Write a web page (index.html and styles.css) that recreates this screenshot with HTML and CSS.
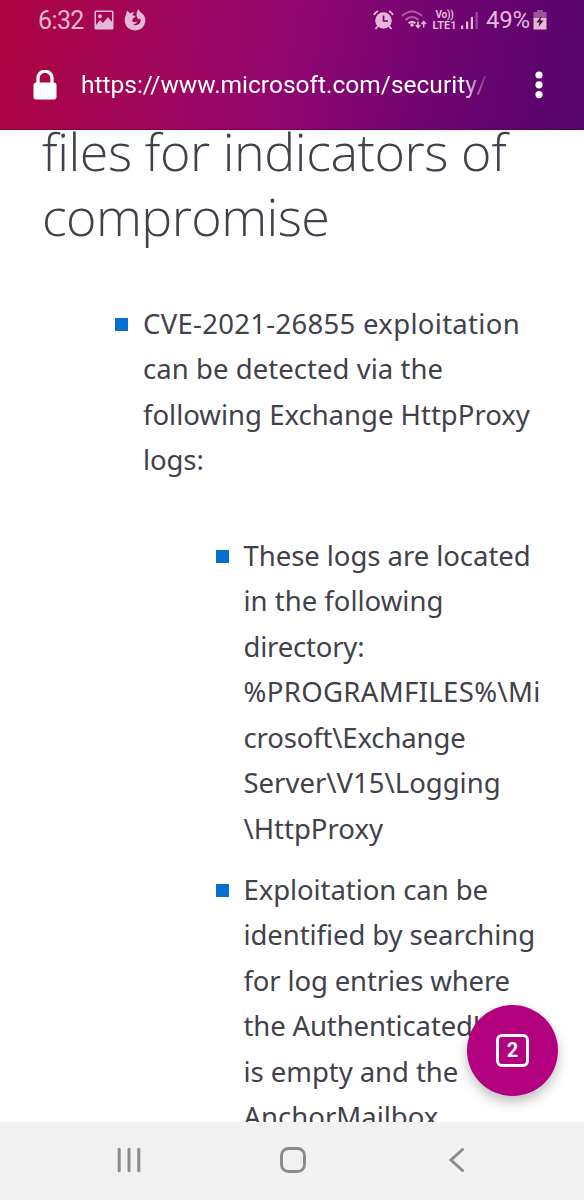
FILE: index.html
```html
<!DOCTYPE html>
<html lang="en">
<head>
<meta charset="utf-8">
<title>Microsoft Security</title>
<link rel="stylesheet" href="styles.css">
</head>
<body>
<div class="phone">
  <header class="chrome">
    <div class="status">
      <span class="clock">6:32</span>
      <svg class="photo" width="20" height="20" viewBox="0 0 20 20"><path fill="currentColor" fill-rule="evenodd" d="M2 0.5H18A1.5 1.5 0 0 1 19.5 2V18A1.5 1.5 0 0 1 18 19.500H2A1.500 1.500 0 0 1 .5 18V2A1.500 1.500 0 0 1 2 .5ZM2 2V15L6 10L9 13L14 7L18 12V2ZM6 4.300A2 2 0 1 1 6 8.300A2 2 0 1 1 6 4.300Z"/></svg>
      <svg class="fox" width="22" height="22" viewBox="0 0 22 22"><path fill="currentColor" d="M3 1.500L6 4.200Q8 3 10.500 3.300Q8.700 4.600 8.500 6.200L11.500 7Q11.500 8.400 9.500 9L8.500 10.500Q7.500 12.500 10 13.200Q11.500 13.500 13.600 12.500Q12.200 15.500 9 15Q11 17 14 15.600Q17.700 13.500 16.200 9.500L15.500 8.700L15.700 11Q12.500 9 12.500 6.500Q12 3 14.500 .3Q15.500 3 18.500 4.800Q22 8.500 21.300 12.500Q20 21.300 11 21.500Q2.500 21 .8 13Q.2 9 2 5.500Z"/></svg>
      <span class="spacer"></span>
      <svg class="alarm" width="21" height="21" viewBox="0 0 21 21"><path d="M1 5Q2 2.500 5 1M20 5Q19 2.500 16 1M5 16L2.500 19M16 16L18.500 19" stroke="currentColor" stroke-width="1.900" fill="none"/><circle cx="10.500" cy="10.500" r="8.300" fill="currentColor"/><path d="M10.500 5.500V11H15" stroke="#790568" stroke-width="1.700" fill="none"/></svg>
      <svg class="wifi" width="26" height="20" viewBox="0 0 26 20"><g fill="none" stroke="currentColor" stroke-width="2"><path opacity=".5" d="M1 6Q11 -3 21 6"/><path opacity=".5" d="M4.500 10Q11 4 17.500 10"/><path d="M7.500 13.300Q11 10.500 14.500 13.300"/><path stroke-width="1.500" d="M17 11.500V17M14.800 15L17 17.500L19.200 15M22.700 17.500V11.500M20.500 14L22.700 11.500L25 14"/></g><circle cx="11" cy="15" r="1.800" fill="currentColor"/></svg>
      <span class="lte"><span class="volte">Vo))</span><span>LTE1</span></span>
      <svg class="signal" width="18" height="20" viewBox="0 0 18 20"><path fill="currentColor" d="M0 15.500H2.200V19H0ZM5 11.500H7.200V19H5ZM9.800 7H12V19H9.800Z"/><path opacity=".4" fill="currentColor" d="M14.500 2H16.700V19H14.500Z"/></svg>
      <span class="percent">49%</span>
      <svg class="battery" width="14" height="20" viewBox="0 0 14 20"><path opacity=".45" fill="currentColor" d="M4 0H10V2H13.500V9H.5V2H4Z"/><path fill="currentColor" d="M.5 8H13.500V19.500H.5Z"/><path d="M8.500 5.500L3.500 12.500H6.500L5.500 17L10.500 10.500H7.500Z" fill="#420948"/></svg>
    </div>
    <div class="address">
      <svg class="lock" width="24" height="30" viewBox="0 0 24 30"><path d="M5 14V8.200A7 7 0 0 1 19 8.200V14" fill="none" stroke="#fff" stroke-width="3.300"/><rect x=".5" y="12.500" width="23" height="17" rx="2.800" fill="#fff"/></svg>
      <span class="url">https://www.microsoft.com/security/</span>
      <svg class="more" width="8" height="28" viewBox="0 0 8 28"><g fill="#fff"><circle cx="4" cy="4" r="3.600"/><circle cx="4" cy="13.800" r="3.600"/><circle cx="4" cy="23.600" r="3.600"/></g></svg>
    </div>
  </header>
  <main class="page">
    <h1 class="title"><span class="line">files for indicators of</span><span class="line t2">compromise</span></h1>
    <ul class="list">
      <li class="item">
        <span class="line a1">CVE-2021-26855 exploitation</span>
        <span class="line a2">can be detected via the</span>
        <span class="line a3">following Exchange HttpProxy</span>
        <span class="line a4">logs:</span>
        <ul class="list nested">
          <li class="item">
            <span class="line b1">These logs are located</span>
            <span class="line b2">in the following</span>
            <span class="line b3">directory:</span>
            <span class="line b4">%PROGRAMFILES%\Mi</span>
            <span class="line b5">crosoft\Exchange</span>
            <span class="line b6">Server\V15\Logging</span>
            <span class="line b7">\HttpProxy</span>
          </li>
          <li class="item">
            <span class="line c1">Exploitation can be</span>
            <span class="line c2">identified by searching</span>
            <span class="line c3">for log entries where</span>
            <span class="line c4">the AuthenticatedU</span>
            <span class="line c5">is empty and the</span>
            <span class="line c6">AnchorMailbox</span>
          </li>
        </ul>
      </li>
    </ul>
  </main>
  <button class="tabs"><span class="count">2</span></button>
  <nav class="navbar">
    <svg width="26" height="26" viewBox="0 0 26 26"><path d="M3.200 2.200V23.800M13 2.200V23.800M22.800 2.200V23.800"/></svg>
    <svg width="28" height="28" viewBox="0 0 28 28"><rect x="2.500" y="2.500" width="23" height="23" rx="7"/></svg>
    <svg width="26" height="26" viewBox="0 0 26 26"><path d="M18.500 2.500L7 13L18.500 23.500"/></svg>
  </nav>
</div>
</body>
</html>
```

FILE: styles.css
```css
* { box-sizing: border-box; }
body { margin: 0; background: #fff; }
.phone {
  position: relative;
  display: flex;
  flex-direction: column;
  width: 584px;
  height: 1200px;
  overflow: hidden;
}
.chrome {
  flex: none;
  height: 130px;
  background: linear-gradient(101deg, #ae0540 0%, #a0065a 27%, #900570 50%, #6d0470 76%, #55046c 100%);
  border-bottom: 1px solid rgba(60, 0, 50, .35);
  font-family: Roboto, sans-serif;
}
.status {
  display: flex;
  align-items: center;
  height: 40px;
  padding: 0 37px 0 38px;
  color: #e6b8d8;
}
.clock { width: 56px; font-size: 25px; letter-spacing: -.6px; }
.fox { margin-left: 10px; }
.spacer { flex: 1; }
.wifi { margin-left: 7px; }
.lte {
  display: flex;
  flex-direction: column;
  width: 25px;
  margin-left: 5px;
  margin-right: 1px;
  font-size: 11px;
  font-weight: 700;
  line-height: 11px;
  white-space: nowrap;
  text-align: center;
}
.volte { font-size: 10px; line-height: 10px; letter-spacing: -.3px; }
.signal { margin-left: 3px; }
.percent { width: 45px; margin-left: 7px; font-size: 24px; letter-spacing: -.3px; white-space: nowrap; }
.battery { margin-left: 2px; }
.address {
  display: flex;
  align-items: center;
  height: 90px;
  padding: 0 41px 0 33px;
}
.url {
  width: 405px;
  margin-left: 24px;
  font-size: 24.500px;
  line-height: 30px;
  color: #fff;
  white-space: nowrap;
  overflow: hidden;
  -webkit-mask-image: linear-gradient(90deg, #000 380px, transparent 410px);
  mask-image: linear-gradient(90deg, #000 380px, transparent 410px);
}
.more { margin-left: auto; }
.page {
  flex: 1;
  min-height: 0;
  overflow: hidden;
  padding-left: 42px;
  font-family: "Noto Sans", "Open Sans", sans-serif;
  color: #41414b;
}
.line { display: block; white-space: pre; }
.title {
  margin: -12px 0 53px;
  font-family: "Open Sans", "Noto Sans", sans-serif;
  font-size: 52px;
  font-weight: 300;
  line-height: 65px;
  letter-spacing: -.45px;
}
.t2 { letter-spacing: -.6px; }
.list { margin: 0; padding: 0; list-style: none; }
.item {
  position: relative;
  margin-left: 101px;
  font-size: 27.500px;
  line-height: 45.450px;
}
.item::before {
  content: "";
  position: absolute;
  top: 17px;
  left: -28px;
  width: 13px;
  height: 13px;
  background: #0471d1;
}
.a1 { letter-spacing: .3px; }
.a2 { letter-spacing: .05px; }
.a4 { letter-spacing: -.1px; }
.b1 { letter-spacing: -.05px; }
.b3 { letter-spacing: -.2px; }
.b4 { letter-spacing: .35px; }
.b5 { letter-spacing: -.15px; }
.c1, .c2 { letter-spacing: -.08px; }
.c3 { letter-spacing: -.15px; }
.c4 { letter-spacing: -.13px; }
.c5 { letter-spacing: -.05px; }
.nested { margin-top: 50px; }
.nested .item { margin-left: 100.500px; margin-bottom: 16px; }
.tabs {
  position: absolute;
  left: 467px;
  top: 1005px;
  display: flex;
  align-items: center;
  justify-content: center;
  width: 91px;
  height: 91px;
  padding: 0;
  border: 0;
  border-radius: 50%;
  background: #b3007f;
  box-shadow: 0 6px 12px rgba(0, 0, 0, .25);
}
.count {
  width: 33px;
  height: 33px;
  border: 3px solid #fff;
  border-radius: 6px;
  font: 700 20px/27px Roboto, sans-serif;
  color: #fff;
}
.navbar {
  flex: none;
  display: flex;
  justify-content: space-between;
  align-items: center;
  height: 78px;
  padding: 0 114px 3px 116px;
  background: #f1f1f1;
  fill: none;
  stroke: #8b8b8b;
  stroke-width: 3;
  stroke-linecap: round;
}
```
